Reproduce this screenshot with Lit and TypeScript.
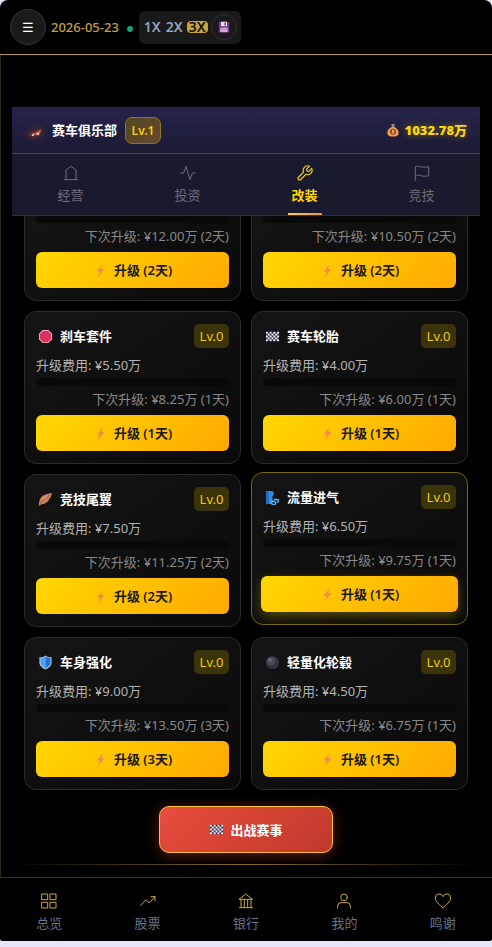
import { LitElement, html, css, svg, nothing } from "lit";
import { customElement, property, state } from "lit/decorators.js";
import { classMap } from "lit/directives/class-map.js";

const line = (body: unknown, width = 1.5) => svg`
  <svg viewBox="0 0 24 24" fill="none" stroke="currentColor" stroke-width=${width}
    stroke-linecap="round" stroke-linejoin="round" aria-hidden="true">${body}</svg>`;

const lineIcons: Record<string, unknown> = {
  manage: line(svg`<path d="M2 22h20M4.500 22V7.500L12 2l7.500 5.500V22"/>`),
  invest: line(svg`<path d="M1 12h4.500L9 2l6 20 3.500-10H23"/>`),
  tune: line(svg`<g transform="translate(-2 -1) scale(1.120)"><path d="M14.700 6.300a1 1 0 0 0 0 1.400l1.600 1.600a1 1 0 0 0 1.400 0l3.800-3.800a6 6 0 0 1-7.900 7.900l-6.900 6.900a2.100 2.100 0 0 1-3-3l6.900-6.900a6 6 0 0 1 7.900-7.900z"/></g>`),
  race: line(svg`<path d="M2 23V2.500c5-3 9 3 20 0v13.500c-9 3-14-3-20 0"/>`),
  overview: line(svg`<path d="M1.500 1.500h8.500v8.500H1.500zM14 1.500h8.500v8.500H14zM1.500 14h8.500v8.500H1.500zM14 14h8.500v8.500H14z"/>`),
  stocks: line(svg`<path d="M1 18.500l8-8.500 5 5 8.500-9.500M16.500 5.500h6v6"/>`),
  bank: line(svg`<path d="M2 22h20M2 9.500h20L12 2zM4.500 10v12M19.500 10v12M9.500 10v12M14.500 10v12"/>`),
  me: line(svg`<circle cx="12" cy="6.500" r="5"/><path d="M2.500 22.500v-3a5 5 0 0 1 5-5h9a5 5 0 0 1 5 5v3"/>`),
  thanks: line(svg`<path d="M12 22C7 17.500 0.500 13 0.500 7.500a5.900 5.900 0 0 1 11.500-2 5.900 5.900 0 0 1 11.500 2c0 5.500-6.500 10-11.500 14.500z"/>`),
};

const pic = (body: unknown) => svg`<svg viewBox="0 0 16 16" aria-hidden="true">${body}</svg>`;

const flagCells: unknown[] = [];
for (let r = 0; r < 5; r++) {
  for (let c = 0; c < 7; c++) {
    if ((r + c) % 2 === 0) {
      flagCells.push(svg`<rect x=${1 + c * 2} y=${3 + r * 2} width="2" height="2" fill="#f4f1fa"/>`);
    }
  }
}

const pictures: Record<string, unknown> = {
  bolt: pic(svg`<path d="M10.500 1L4 9h3.300L5 15.500l7-9H8.500z" fill="#f58a4b"/>`),
  car: pic(svg`<path d="M1 11c1-2 4-2.500 6-3l3-1 5-3-1 5-4 3H3z" fill="#6e2c26"/><path d="M5 10l4-1.500 5-3-1 4-4 1.500z" fill="#c9604a"/><circle cx="6" cy="11" r="1.200" fill="#d9b9b0"/><circle cx="11" cy="10" r="1.200" fill="#f0cfc0"/>`),
  money: pic(svg`<path d="M6 1h4l-.7 3.500H6.700z" fill="#9a8d80"/><path d="M6.500 4.500h3C12 5.500 14.500 8 14.500 11c0 3.500-3 4.500-6.500 4.500s-6.500-1-6.500-4.500c0-3 2.500-5.500 5-6.500z" fill="#f39a52"/><circle cx="8" cy="10" r="3.300" fill="#8a4620"/><path d="M9.300 8.700H7.400v1.300h1.400v1.300H6.800M8 7.800v4.400" fill="none" stroke="#ffc46b" stroke-width=".9"/>`),
  brake: pic(svg`<path d="M5 1h6l4 4v6l-4 4H5l-4-4V5z" fill="#f4a6bd"/><path d="M5.500 2h5L14 5.500v5L10.500 14h-5L2 10.500v-5z" fill="#dc2f62"/>`),
  flag: pic(svg`<rect x="1" y="3" width="14" height="10" fill="#39344a"/>${flagCells}`),
  wing: pic(svg`<path d="M1 15c0-3 0-8 4-11 3-2 7-2.500 10-3-1 2 0 4-3 6 0 3-4 6-8 6z" fill="#c9835f"/><path d="M1.500 14.500C4 10 8 6 13 3" stroke="#8e5034" fill="none" stroke-width=".8"/><path d="M5 8l5-4" stroke="#efb291" fill="none"/>`),
  wind: pic(svg`<path d="M1 1h6c1.500 0 2.500 1 2.500 3L8 7v4l-1 4H1z" fill="#2f8be6"/><path d="M1 1h3v14H1z" fill="#1d6fc4"/><path d="M7 12h2a2 2 0 1 1-1.500 1M10 10h3a1.500 1.500 0 1 1 0 3" fill="none" stroke="#56b8f2" stroke-width="1.600" stroke-linecap="round"/>`),
  shield: pic(svg`<path d="M8 .5c2 1.500 4.500 2 6.500 2V8c0 3.500-3 6-6.500 7.500C4.500 14 1.500 11.500 1.500 8V2.500c2 0 4.500-.5 6.500-2z" fill="#a9c9e8"/><path d="M8 1.700c-1.500 1-3.500 1.600-5.300 1.700V8c0 3 2.500 5 5.300 6.300z" fill="#4aa3f4"/><path d="M8 1.700c1.500 1 3.500 1.600 5.300 1.700V8c0 3-2.500 5-5.300 6.300z" fill="#2571cc"/>`),
  hub: pic(svg`<circle cx="8" cy="8" r="7" fill="#37323f"/><circle cx="6.500" cy="6.500" r="4.500" fill="#4d4757"/><circle cx="5.500" cy="5.500" r="2" fill="#6a6474"/>`),
  disk: pic(svg`<path d="M1 1h12l2 2v12H1z" fill="#6d3b86"/><path d="M4 1h8v6H4z" fill="#e9dff2"/><path d="M8.500 2h2v4h-2z" fill="#6d3b86"/><path d="M3 9h10v6H3z" fill="#d9a6dc"/><path d="M3 11h10v1H3z" fill="#b77fc0"/>`),
};

interface Part {
  icon?: string;
  name?: string;
  cost?: string;
  next: string;
  days: number;
  raised?: boolean;
}

const parts: Part[] = [
  { next: "12.00", days: 2 },
  { next: "10.50", days: 2 },
  { icon: "brake", name: "刹车套件", cost: "5.50", next: "8.25", days: 1 },
  { icon: "flag", name: "赛车轮胎", cost: "4.00", next: "6.00", days: 1 },
  { icon: "wing", name: "竞技尾翼", cost: "7.50", next: "11.25", days: 2 },
  { icon: "wind", name: "流量进气", cost: "6.50", next: "9.75", days: 1, raised: true },
  { icon: "shield", name: "车身强化", cost: "9.00", next: "13.50", days: 3 },
  { icon: "hub", name: "轻量化轮毂", cost: "4.50", next: "6.75", days: 1 },
];

const reset = css`
  * { box-sizing: border-box; }
  button { font: inherit; color: inherit; border: 0; padding: 0; margin: 0; background: none; cursor: pointer; }
  svg { display: block; width: 16px; height: 16px; flex: none; }
`;

@customElement("part-card")
export class PartCard extends LitElement {
  @property({ attribute: false }) part!: Part;

  static styles = [reset, css`
    :host { display: block; min-width: 0; }
    .card {
      padding: 12px 11px; border: 1px solid #2b2b2b; border-radius: 12px;
      background: linear-gradient(145deg, #141414, #0a0a0a);
    }
    .raised { margin: -2px 0 2px; border-color: #75660f; }
    .head { display: flex; align-items: center; height: 24px; margin-bottom: 8px; }
    .head svg { margin-left: 2px; width: 15px; height: 15px; }
    .name { margin: 0 auto 0 7px; font-size: 13px; font-weight: 700; color: #fff; }
    .level {
      width: 35px; text-align: center; border-radius: 5px; line-height: 24px;
      background: #3b330a; color: #f0cc08;
    }
    .cost, .next { line-height: 18px; color: #b3b3b3; white-space: nowrap; }
    .bar { height: 8px; margin: 4px 0; border-radius: 4px; background: #090909; }
    .next { text-align: right; color: #888; margin-bottom: 7px; }
    .upgrade {
      display: flex; align-items: center; justify-content: center; gap: 6px;
      width: 100%; height: 36px; border-radius: 6px;
      background: linear-gradient(135deg, #ffd700, #ffaa00);
      color: #1a1a1a; font-weight: 600;
    }
    .upgrade svg { width: 15px; height: 15px; }
    .raised .upgrade {
      width: calc(100% + 4px); margin: 0 -2px;
      box-shadow: 0 4px 12px rgba(255, 215, 0, 0.3);
    }
  `];

  render() {
    const p = this.part;
    return html`
      <article class=${classMap({ card: true, raised: !!p.raised })}>
        ${p.name ? html`
          <div class="head">
            ${pictures[p.icon ?? ""]}
            <h3 class="name">${p.name}</h3>
            <span class="level">Lv.0</span>
          </div>
          <div class="cost">升级费用: ¥${p.cost}万</div>` : nothing}
        <div class="bar"></div>
        <div class="next">下次升级: ¥${p.next}万 (${p.days}天)</div>
        <button class="upgrade">${pictures.bolt}<span>升级 (${p.days}天)</span></button>
      </article>`;
  }
}

@customElement("app-root")
export class AppRoot extends LitElement {
  @state() private tab = "tune";
  @state() private speed = 3;

  static styles = [reset, css`
    :host {
      display: flex; flex-direction: column; height: 100vh; padding-bottom: 6px;
      box-sizing: border-box; background: #e4e7f5;
      font: 13px/20px "Noto Sans", "Noto Sans CJK SC", sans-serif;
    }
    .frame {
      flex: 1; min-height: 0; display: flex; flex-direction: column;
      background: #000; border-radius: 8px 8px 3px 3px; overflow: hidden;
    }
    .top {
      display: flex; align-items: center; height: 55px; padding: 0 10px;
      border-bottom: 1px solid #b8983a;
    }
    .menu {
      width: 36px; height: 36px; border-radius: 50%; border: 1px solid #333;
      background: #1a1a1a; color: #fff; display: grid; place-items: center;
    }
    .date { margin-left: 5px; color: #c4a042; font-weight: 500; }
    .dot { width: 6px; height: 6px; margin: 4px 6px 0 8px; border-radius: 50%; background: #17a072; }
    .speeds {
      display: flex; align-items: center; height: 33px; padding: 0 4px 0 5px;
      border-radius: 6px; background: #191919;
    }
    .speed {
      margin-right: 5px; font-size: 14px; line-height: 12px;
      color: #94a3b8; font-weight: 600; border-radius: 4px;
    }
    .speed.on { margin: 0 3px 0 -1px; padding: 0 2px; background: #c9a23c; color: #111; }
    .save {
      width: 26px; height: 26px; border-radius: 50%; border: 1px solid #303030;
      background: #1a1a1a; display: grid; place-items: center;
    }
    .save svg { width: 12px; height: 12px; }

    .main {
      flex: 1; min-height: 0; display: flex; flex-direction: column;
      padding: 52px 12px 12px 11px; border-left: 1px solid #292715;
    }
    .club {
      display: flex; align-items: center; height: 47px; padding: 0 13px 0 15px;
      background: linear-gradient(#25234b, #1b1a33); border-bottom: 1px solid #4b494c;
    }
    .club .car svg { margin-top: 4px; filter: drop-shadow(0 0 4px #a4452f); }
    .title { margin: 0 8px 0 9px; font-size: 13px; font-weight: 700; color: #fff; }
    .rank {
      width: 36px; text-align: center; border: 1px solid #8f7819; border-radius: 7px;
      font-size: 12px; line-height: 25px; font-weight: 600;
      background: linear-gradient(135deg, #544723, #66482c); color: #f5cf0c;
    }
    .cash {
      display: flex; align-items: center; gap: 5px; margin-left: auto;
      color: #ffd700; font-weight: 900; text-shadow: 0 0 8px rgba(255, 215, 0, 0.4);
    }
    .cash svg { width: 14px; height: 14px; }
    .tabs { display: grid; grid-template-columns: repeat(4, 1fr); background: #1a1a2e; border-bottom: 1px solid #2e2e40; }
    .tab {
      display: flex; flex-direction: column; align-items: center;
      height: 61px; padding-top: 11px; gap: 4px; color: #6b6c7c;
    }
    .tab.on { color: #ffd700; font-weight: 600; }
    .tab.on::after {
      content: ""; width: 34px; height: 2px; margin-top: auto;
      background: linear-gradient(90deg, #ffd23c, #e8952e);
    }

    .scroll {
      flex: 1; min-height: 0; display: flex; flex-direction: column-reverse;
      overflow-y: auto; scrollbar-width: none; padding: 0 12px;
    }
    .list { display: grid; grid-template-columns: 1fr 1fr; gap: 10px; }
    .start { display: flex; justify-content: center; padding: 16px 0 11px; }
    .go {
      display: flex; align-items: center; justify-content: center; gap: 6px;
      width: 174px; height: 47px; border: 1px solid #ffc03a; border-radius: 10px;
      background: linear-gradient(135deg, #e74c3c, #c0392b);
      color: #fff; font-weight: 700; box-shadow: 0 2px 14px rgba(231, 76, 40, 0.4);
    }
    .go svg { width: 15px; height: 15px; }
    .rule { height: 1px; flex: none; background: linear-gradient(90deg, transparent, #85702a, transparent); }

    .nav {
      display: grid; grid-template-columns: repeat(5, 1fr); height: 64px;
      border-top: 1px solid #33322a; background: #000;
    }
    .link {
      display: flex; flex-direction: column; align-items: center; gap: 4px;
      padding-top: 15px; color: #64748b; text-decoration: none;
    }
    .link svg { color: #c8a843; }
  `];

  render() {
    const tabs = [["manage", "经营"], ["invest", "投资"], ["tune", "改装"], ["race", "竞技"]];
    const links = [["overview", "总览"], ["stocks", "股票"], ["bank", "银行"], ["me", "我的"], ["thanks", "鸣谢"]];
    return html`
      <div class="frame">
        <header class="top">
          <button class="menu" aria-label="菜单">☰</button>
          <time class="date">2026-05-23</time>
          <span class="dot"></span>
          <div class="speeds">
            ${[1, 2, 3].map((n) => html`
              <button class=${classMap({ speed: true, on: this.speed === n })}
                @click=${() => (this.speed = n)}>${n}X</button>`)}
            <button class="save" aria-label="保存">${pictures.disk}</button>
          </div>
        </header>
        <main class="main">
          <div class="club">
            <span class="car">${pictures.car}</span>
            <h2 class="title">赛车俱乐部</h2>
            <span class="rank">Lv.1</span>
            <span class="cash">${pictures.money}<span>1032.78万</span></span>
          </div>
          <div class="tabs">
            ${tabs.map(([id, label]) => html`
              <button class=${classMap({ tab: true, on: this.tab === id })}
                aria-current=${this.tab === id ? "true" : nothing}
                @click=${() => (this.tab = id)}>${lineIcons[id]}<span>${label}</span></button>`)}
          </div>
          <div class="scroll">
            <div>
              <div class="list">${parts.map((p) => html`<part-card .part=${p}></part-card>`)}</div>
              <div class="start"><button class="go">${pictures.flag}<span>出战赛事</span></button></div>
            </div>
          </div>
          <div class="rule"></div>
        </main>
        <nav class="nav">
          ${links.map(([id, label]) => html`<a class="link" href="#${id}">${lineIcons[id]}<span>${label}</span></a>`)}
        </nav>
      </div>`;
  }
}
